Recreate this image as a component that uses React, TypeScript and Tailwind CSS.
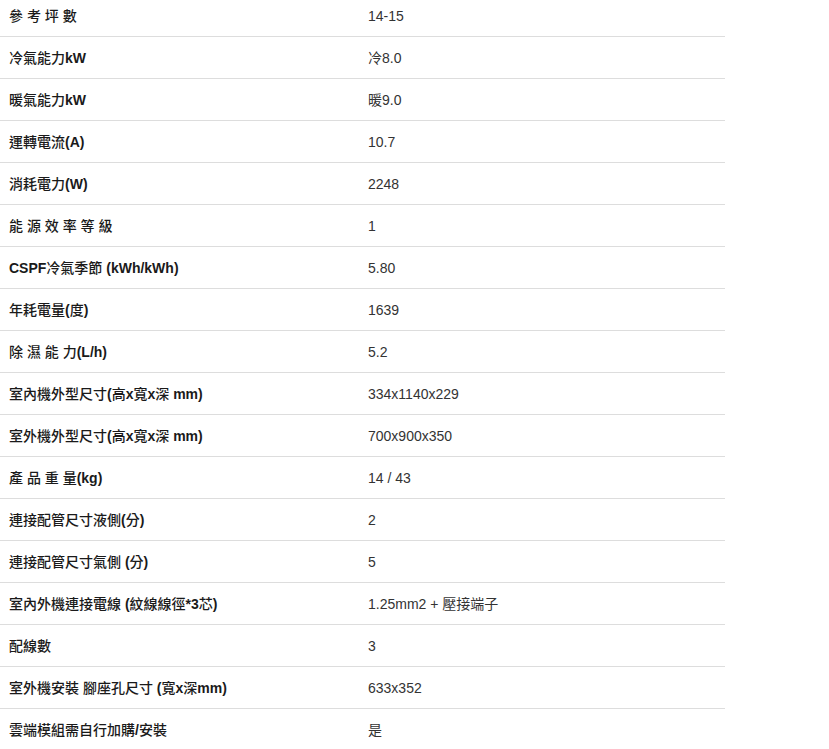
const specs: [string, string][] = [
  ['參 考 坪 數', '14-15'],
  ['冷氣能力kW', '冷8.0'],
  ['暖氣能力kW', '暖9.0'],
  ['運轉電流(A)', '10.7'],
  ['消耗電力(W)', '2248'],
  ['能 源 效 率 等 級', '1'],
  ['CSPF冷氣季節 (kWh/kWh)', '5.80'],
  ['年耗電量(度)', '1639'],
  ['除 濕 能 力(L/h)', '5.2'],
  ['室內機外型尺寸(高x寬x深 mm)', '334x1140x229'],
  ['室外機外型尺寸(高x寬x深 mm)', '700x900x350'],
  ['產 品 重 量(kg)', '14 / 43'],
  ['連接配管尺寸液側(分)', '2'],
  ['連接配管尺寸氣側 (分)', '5'],
  ['室內外機連接電線 (紋線線徑*3芯)', '1.25mm2 + 壓接端子'],
  ['配線數', '3'],
  ['室外機安裝 腳座孔尺寸 (寬x深mm)', '633x352'],
  ['雲端模組需自行加購/安裝', '是'],
];

// latin bits of the label are bold, the CJK bits only medium
const Label = ({ text }: { text: string }) => {
  const parts = text.split(/([\u3000-\u9fff\uff00-\uffef]+)/).filter(Boolean);
  return (
    <>
      {parts.map((p, i) =>
        /[\u3000-\u9fff\uff00-\uffef]/.test(p) ? (
          <span key={i} className="font-medium">{p}</span>
        ) : (
          <span key={i} className="font-bold">{p}</span>
        )
      )}
    </>
  );
};

export default function App() {
  return (
    <div className="bg-white min-h-screen overflow-hidden">
      <div
        className="w-[725px] -mt-[5px] text-[14px] leading-[20px]"
        style={{ fontFamily: '"Liberation Sans", "Noto Sans CJK TC", sans-serif' }}
      >
        {specs.map(([label, value]) => (
          <div key={label} className="flex border-b border-[#dddddd] h-[42px] pt-[11px]">
            <div className="w-[359px] pl-[9px] text-[#1a1a1a] whitespace-pre">
              <Label text={label} />
            </div>
            <div className="flex-1 pl-[9px] text-[#333333]">{value}</div>
          </div>
        ))}
      </div>
    </div>
  );
}
